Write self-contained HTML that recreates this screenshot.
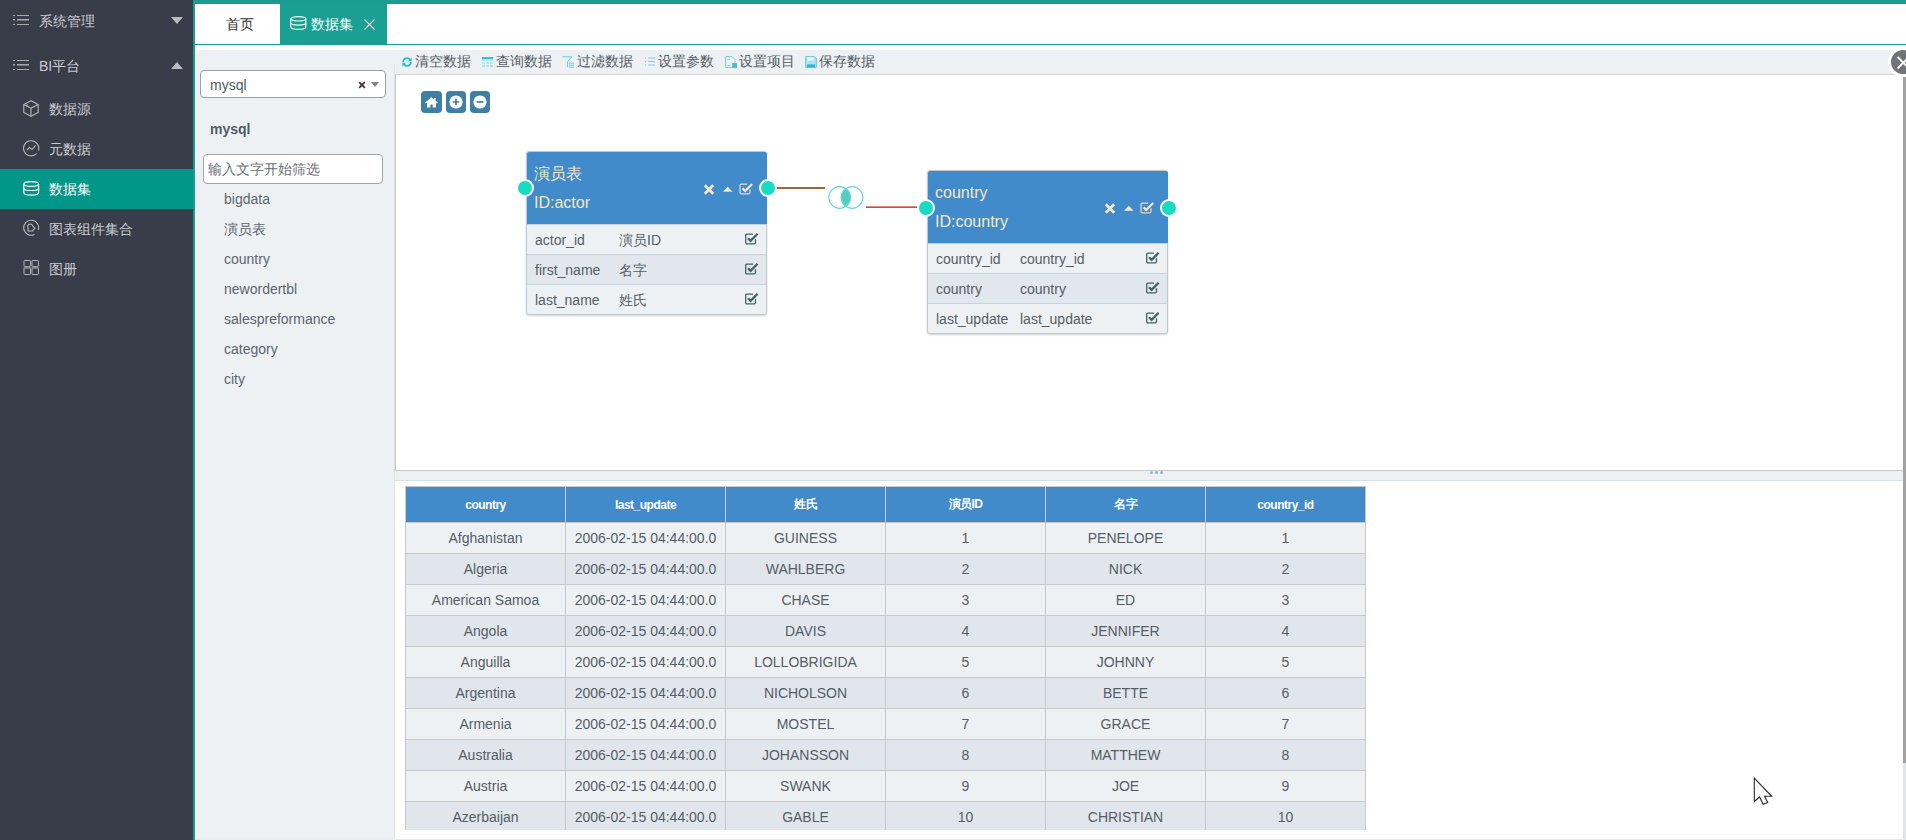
<!DOCTYPE html>
<html><head><meta charset="utf-8">
<style>
*{margin:0;padding:0;box-sizing:border-box}
html,body{width:1906px;height:840px;overflow:hidden;background:#fff;font-family:"Liberation Sans",sans-serif;position:relative}
.abs{position:absolute}
#side{left:0;top:0;width:193px;height:840px;background:#393d49}
.mi{position:absolute;left:0;width:193px;height:40px;color:#c9cbce;font-size:14px;line-height:40px}
.mi .t{position:absolute;left:49px;top:1px}
.mi svg{position:absolute}
#vbar{left:193px;top:0;width:2px;height:840px;background:#1a9c90}
#topbar{left:193px;top:0;width:1713px;height:4px;background:#1a9c90}
#tabline{left:195px;top:44px;width:1711px;height:1px;background:#1a9c90}
.tab{position:absolute;top:4px;height:40px;line-height:40px;font-size:14px}
#left{left:195px;top:50px;width:200px;height:790px;background:#edf1f4}
#sel{left:200px;top:70px;width:186px;height:28px;background:#fff;border:1px solid #9aa0a5;border-radius:4px;font-size:14px;color:#4f5a63;line-height:28px;padding-left:9px}
#filt{left:203px;top:154px;width:180px;height:30px;background:#fff;border:1px solid #a0a5a9;border-radius:4px;font-size:14px;color:#6b6f73;line-height:28px;padding-left:4px}
.li{position:absolute;left:224px;font-size:14px;color:#5b6670;line-height:20px}
#tool{left:395px;top:50px;width:1511px;height:25px;background:#edf1f4;border-bottom:1px solid #d3d6d9}
.tb{position:absolute;top:52px;font-size:14px;color:#555d66;line-height:18px}
#canvas{left:395px;top:75px;width:1511px;height:396px;background:#fff;border-left:1px solid #c8c8c8;border-bottom:1px solid #c8c8c8}
#split{left:395px;top:471px;width:1511px;height:10px;background:#edf1f4;border-bottom:1px solid #d7e1e8}
.zb{position:absolute;top:91px;width:20px;height:21px;background:#3e7fa3;border-radius:4px}
.dt{position:absolute;width:241px;background:#edf1f4;border:1px solid #c2c9ce;border-radius:3px;box-shadow:0 1px 2px rgba(0,0,0,.18)}
.dh{position:relative;height:72px;margin-right:-1px;margin-top:-0px;background:#428bca;color:#f6e7c6;font-size:16px;border-radius:2px 2px 0 0}
.dr{position:relative;height:30px;border-top:1px solid #c5d3dc;font-size:14px;color:#555e66;line-height:30px}
.dr.alt{background:#e2e6ed}
.dr .c1{position:absolute;left:8px}
.dr .c2{position:absolute;left:92px}
.dr svg{position:absolute;left:218px;top:8px}
.dot{position:absolute;width:18px;height:18px;border-radius:50%;background:#17dcc1;border:2px solid #fff}
#grid{border-collapse:collapse;font-size:14px;color:#555d66}
#grid td,#grid th{width:160px;text-align:center;border:1px solid #c8c8c8}
#grid th{height:36px;background:#428bca;color:#fff;font-size:12px;font-weight:bold;letter-spacing:-0.5px}
#grid td{height:31px;background:#edf1f4}
#grid tr.alt td{background:#e1e5ec}
</style></head><body>
<div id="side" class="abs">
  <div class="mi" style="top:0px;height:40px"><svg style="left:13px;top:15px" width="16" height="10" viewBox="0 0 16 10"><g fill="#a9abae"><rect x="0" y="0" width="2" height="1"/><rect x="4" y="0" width="12" height="1"/><rect x="0" y="4" width="2" height="1.5"/><rect x="4" y="4" width="12" height="1.5"/><rect x="0" y="9" width="2" height="1"/><rect x="4" y="9" width="12" height="1"/></g></svg><span class="t" style="left:39px">系统管理</span><svg style="left:171px;top:17px" width="12" height="7"><path d="M0 0H12L6 7Z" fill="#b9bbbe"/></svg></div>
  <div class="mi" style="top:45px"><svg style="left:13px;top:15px" width="16" height="10" viewBox="0 0 16 10"><g fill="#a9abae"><rect x="0" y="0" width="2" height="1"/><rect x="4" y="0" width="12" height="1"/><rect x="0" y="4" width="2" height="1.5"/><rect x="4" y="4" width="12" height="1.5"/><rect x="0" y="9" width="2" height="1"/><rect x="4" y="9" width="12" height="1"/></g></svg><span class="t" style="left:39px">BI平台</span><svg style="left:171px;top:17px" width="12" height="7"><path d="M0 7H12L6 0Z" fill="#b9bbbe"/></svg></div>
  <div class="mi" style="top:88px"><svg style="left:23px;top:12px" width="16" height="17" viewBox="0 0 16 17"><g fill="none" stroke="#b5b8bc" stroke-width="1.1" stroke-linejoin="round"><path d="M8 0.8L15.2 4.4V12.4L8 16.2L0.8 12.4V4.4Z"/><path d="M0.8 4.4L8 8.2L15.2 4.4M8 8.2V16.2"/><path d="M2.8 5.8L5 4.8"/></g></svg><span class="t">数据源</span></div>
  <div class="mi" style="top:128px"><svg style="left:23px;top:12px" width="17" height="17" viewBox="0 0 17 17"><g fill="none" stroke="#b5b8bc" stroke-width="1.1"><path d="M13.6 13.6A7.6 7.6 0 1 1 15.4 10.6"/><path d="M3.8 10.2L6.5 7.5L9 9.6L12.6 5.4"/></g></svg><span class="t">元数据</span></div>
  <div class="mi" style="top:169px;background:#009688;color:#fff"><svg style="left:23px;top:12px" width="17" height="15" viewBox="0 0 17 15"><g fill="none" stroke="#fff" stroke-width="1.2"><ellipse cx="8.2" cy="3" rx="7.4" ry="2.4"/><path d="M0.8 3V11.6C0.8 13 4 14.2 8.2 14.2S15.6 13 15.6 11.6V3"/><path d="M0.8 6.9C0.8 8.3 4 9.5 8.2 9.5S15.6 8.3 15.6 6.9"/></g></svg><span class="t" style="top:0">数据集</span></div>
  <div class="mi" style="top:208px"><svg style="left:23px;top:11px" width="17" height="17" viewBox="0 0 17 17"><g fill="none" stroke="#b5b8bc" stroke-width="1.1"><path d="M11.5 15.4A7.5 7.5 0 1 1 15.3 11"/><path d="M7.2 5.2A2.2 2.2 0 0 1 9.8 7.2L12 9.2L9.8 11.2V12H5V8.5A2.2 2.2 0 0 1 7.2 5.2Z"/></g></svg><span class="t">图表组件集合</span></div>
  <div class="mi" style="top:248px"><svg style="left:23px;top:11px" width="17" height="17" viewBox="0 0 17 17"><g fill="none" stroke="#b5b8bc" stroke-width="1"><rect x="1" y="1.5" width="6.5" height="6" rx="0.8"/><rect x="9" y="1.5" width="6.5" height="6" rx="0.8"/><rect x="1" y="9" width="6.5" height="6.5" rx="0.8"/><rect x="9" y="9" width="6.5" height="6.5" rx="0.8"/></g><rect x="0.5" y="7" width="7.5" height="2.5" fill="#8f9296" opacity="0.55"/><rect x="8.5" y="7" width="7.5" height="2.5" fill="#8f9296" opacity="0.55"/></svg><span class="t">图册</span></div>
</div>
<div id="vbar" class="abs"></div>
<div id="topbar" class="abs"></div>
<div class="tab" style="left:195px;width:85px;background:#fff;color:#333;text-align:center;padding-left:4px">首页</div>
<div class="tab" style="left:280px;width:107px;background:#1a9f93;color:#fff"><svg style="position:absolute;left:10px;top:12px" width="17" height="14" viewBox="0 0 17 14"><g fill="none" stroke="#f2f6f6" stroke-width="1.2"><ellipse cx="8.3" cy="2.8" rx="7.5" ry="2.2"/><path d="M0.8 2.8V10.9C0.8 12.2 4 13.3 8.3 13.3S15.8 12.2 15.8 10.9V2.8"/><path d="M0.8 6.8C0.8 8.1 4 9.1 8.3 9.1S15.8 8.1 15.8 6.8"/></g></svg><span style="position:absolute;left:31px">数据集</span><svg style="position:absolute;left:83.5px;top:14.5px" width="11" height="11" viewBox="0 0 11 11"><path d="M0.5 0.5L10.5 10.5M10.5 0.5L0.5 10.5" stroke="#e6dcdc" stroke-width="1.1"/></svg></div>
<div id="tabline" class="abs"></div>

<div id="left" class="abs"></div><div class="abs" style="left:394px;top:64px;width:1px;height:776px;background:#dde2e6"></div>
<div id="sel" class="abs">mysql<svg style="position:absolute;left:157px;top:10px" width="8" height="8" viewBox="0 0 8 8"><path d="M1.2 1.2L6.8 6.8M6.8 1.2L1.2 6.8" stroke="#3a2f38" stroke-width="1.7"/></svg><svg style="position:absolute;left:170px;top:11px" width="8" height="5"><path d="M0 0H8L4 5Z" fill="#7c858c"/></svg></div>
<div class="abs" style="left:210px;top:119px;font-size:14px;font-weight:bold;color:#515c66;line-height:20px">mysql</div>
<div id="filt" class="abs">输入文字开始筛选</div>
<div class="li" style="top:189px">bigdata</div>
<div class="li" style="top:219px">演员表</div>
<div class="li" style="top:249px">country</div>
<div class="li" style="top:279px">newordertbl</div>
<div class="li" style="top:309px">salespreformance</div>
<div class="li" style="top:339px">category</div>
<div class="li" style="top:369px">city</div>

<div id="tool" class="abs"></div>
<div class="tb" style="left:415px">清空数据</div>
<div class="tb" style="left:496px">查询数据</div>
<div class="tb" style="left:577px">过滤数据</div>
<div class="tb" style="left:658px">设置参数</div>
<div class="tb" style="left:739px">设置项目</div>
<div class="tb" style="left:819px">保存数据</div>


<svg class="abs" style="left:402px;top:57px" width="10" height="10" viewBox="0 0 10 10"><g fill="none" stroke="#27bcd4" stroke-width="1.8"><path d="M1.2 5A3.8 3.8 0 0 1 8 2.6"/><path d="M8.8 5A3.8 3.8 0 0 1 2 7.4"/></g><path d="M9.6 0.6V4.2H6Z M0.4 9.4V5.8H4Z" fill="#27bcd4"/></svg>
<svg class="abs" style="left:482px;top:57px" width="11" height="10" viewBox="0 0 11 10"><rect x="0" y="0" width="11" height="10" rx="1" fill="#a9e1ef"/><rect x="0" y="0" width="11" height="2" fill="#3bbdd6"/><g stroke="#fff" stroke-width="0.8"><path d="M3.7 2V10M7.3 2V10M0 4.6H11M0 7.3H11"/></g></svg>
<svg class="abs" style="left:562px;top:56px" width="12" height="12" viewBox="0 0 12 12"><path d="M0.6 0.8H9.8L5.6 5.4V11.2" fill="none" stroke="#52c9dc" stroke-width="0.9"/><g stroke="#52c9dc" stroke-width="0.9"><path d="M7 7.2H12M7 9.2H12M7 11.2H12"/></g></svg>
<svg class="abs" style="left:645px;top:57px" width="10" height="9" viewBox="0 0 10 9"><g stroke="#74d3e6" stroke-width="1"><path d="M0 1H1M3 1H10M0 4.5H1M3 4.5H10M0 8H1M3 8H10"/></g></svg>
<svg class="abs" style="left:725px;top:56px" width="12" height="12" viewBox="0 0 12 12"><path d="M0.6 0.6H7L10 3.6V11.4H0.6Z" fill="#eef6f9" stroke="#62cbe0" stroke-width="0.9"/><path d="M2.5 3.5H5M2.5 9.5H5" stroke="#9ad" stroke-width="0.8"/><rect x="7.2" y="7" width="4.8" height="5" fill="#3fc0d4"/></svg>
<svg class="abs" style="left:805px;top:56px" width="12" height="12" viewBox="0 0 12 12"><path d="M0.6 0.6H9.4L11.4 2.6V11.4H0.6Z" fill="#aee3f0" stroke="#56c8de" stroke-width="0.9"/><rect x="2.6" y="1" width="6" height="3.6" fill="#f4fbfd"/><rect x="2" y="8.4" width="8" height="3" fill="#28b7cf"/></svg>
<div id="canvas" class="abs"></div>
<div class="zb" style="left:421px;width:21px;height:22px"><svg style="position:absolute;left:4px;top:6px" width="13" height="11" viewBox="0 0 13 11"><path d="M6.5 0.3L0.2 5.6L1 6.4L2 5.6V10.6H5.3V7.4H7.7V10.6H11V5.6L12 6.4L12.8 5.6L10.6 3.7V1H9V2.4Z" fill="#fff"/></svg></div>
<div class="zb" style="left:446px;height:22px"><svg style="position:absolute;left:3px;top:4px" width="14" height="14" viewBox="0 0 14 14"><circle cx="7" cy="7" r="6.6" fill="#fff"/><path d="M3.8 7H10.2M7 3.8V10.2" stroke="#3e7fa3" stroke-width="1.7"/></svg></div>
<div class="zb" style="left:470px;height:22px"><svg style="position:absolute;left:3px;top:4px" width="14" height="14" viewBox="0 0 14 14"><circle cx="7" cy="7" r="6.6" fill="#fff"/><path d="M3.6 7H10.4" stroke="#3e7fa3" stroke-width="1.7"/></svg></div>

<div class="dt" style="left:526px;top:151px">
  <div class="dh"><div style="position:absolute;left:7px;top:7px;line-height:29px">演员表<br>ID:actor</div><svg style="position:absolute;left:175.5px;top:30px" width="50" height="14" viewBox="0 0 50 14"><path d="M1.8 3.3L10.2 11.7M10.2 3.3L1.8 11.7" stroke="#f6e7c6" stroke-width="2.8"/><path d="M20 9.8H29.5L24.75 4.8Z" fill="#f6e7c6"/><path d="M47 7.2V10.6Q47 11.8 45.8 11.8H38.2Q37 11.8 37 10.6V3.4Q37 2.2 38.2 2.2H44.2" fill="none" stroke="#e9dcbc" stroke-width="1.2"/><path d="M39.6 6.4L42.2 9L49.2 2" fill="none" stroke="#f6e7c6" stroke-width="2.2"/></svg></div>
  <div class="dr"><span class="c1">actor_id</span><span class="c2">演员ID</span><svg width="14" height="12" viewBox="0 0 14 12"><path d="M10.5 6.2V9.6Q10.5 10.9 9.2 10.9H2Q0.7 10.9 0.7 9.6V2.4Q0.7 1.1 2 1.1H8" fill="none" stroke="#3f6462" stroke-width="1.3"/><path d="M3 5.2L5.6 7.8L12.6 0.8" fill="none" stroke="#3f6462" stroke-width="2.3"/></svg></div>
  <div class="dr alt"><span class="c1">first_name</span><span class="c2">名字</span><svg width="14" height="12" viewBox="0 0 14 12"><path d="M10.5 6.2V9.6Q10.5 10.9 9.2 10.9H2Q0.7 10.9 0.7 9.6V2.4Q0.7 1.1 2 1.1H8" fill="none" stroke="#3f6462" stroke-width="1.3"/><path d="M3 5.2L5.6 7.8L12.6 0.8" fill="none" stroke="#3f6462" stroke-width="2.3"/></svg></div>
  <div class="dr"><span class="c1">last_name</span><span class="c2">姓氏</span><svg width="14" height="12" viewBox="0 0 14 12"><path d="M10.5 6.2V9.6Q10.5 10.9 9.2 10.9H2Q0.7 10.9 0.7 9.6V2.4Q0.7 1.1 2 1.1H8" fill="none" stroke="#3f6462" stroke-width="1.3"/><path d="M3 5.2L5.6 7.8L12.6 0.8" fill="none" stroke="#3f6462" stroke-width="2.3"/></svg></div>
</div>
<div class="dt" style="left:927px;top:170px">
  <div class="dh"><div style="position:absolute;left:7px;top:7px;line-height:29px">country<br>ID:country</div><svg style="position:absolute;left:175.5px;top:30px" width="50" height="14" viewBox="0 0 50 14"><path d="M1.8 3.3L10.2 11.7M10.2 3.3L1.8 11.7" stroke="#f6e7c6" stroke-width="2.8"/><path d="M20 9.8H29.5L24.75 4.8Z" fill="#f6e7c6"/><path d="M47 7.2V10.6Q47 11.8 45.8 11.8H38.2Q37 11.8 37 10.6V3.4Q37 2.2 38.2 2.2H44.2" fill="none" stroke="#e9dcbc" stroke-width="1.2"/><path d="M39.6 6.4L42.2 9L49.2 2" fill="none" stroke="#f6e7c6" stroke-width="2.2"/></svg></div>
  <div class="dr"><span class="c1">country_id</span><span class="c2">country_id</span><svg width="14" height="12" viewBox="0 0 14 12"><path d="M10.5 6.2V9.6Q10.5 10.9 9.2 10.9H2Q0.7 10.9 0.7 9.6V2.4Q0.7 1.1 2 1.1H8" fill="none" stroke="#3f6462" stroke-width="1.3"/><path d="M3 5.2L5.6 7.8L12.6 0.8" fill="none" stroke="#3f6462" stroke-width="2.3"/></svg></div>
  <div class="dr alt"><span class="c1">country</span><span class="c2">country</span><svg width="14" height="12" viewBox="0 0 14 12"><path d="M10.5 6.2V9.6Q10.5 10.9 9.2 10.9H2Q0.7 10.9 0.7 9.6V2.4Q0.7 1.1 2 1.1H8" fill="none" stroke="#3f6462" stroke-width="1.3"/><path d="M3 5.2L5.6 7.8L12.6 0.8" fill="none" stroke="#3f6462" stroke-width="2.3"/></svg></div>
  <div class="dr"><span class="c1">last_update</span><span class="c2">last_update</span><svg width="14" height="12" viewBox="0 0 14 12"><path d="M10.5 6.2V9.6Q10.5 10.9 9.2 10.9H2Q0.7 10.9 0.7 9.6V2.4Q0.7 1.1 2 1.1H8" fill="none" stroke="#3f6462" stroke-width="1.3"/><path d="M3 5.2L5.6 7.8L12.6 0.8" fill="none" stroke="#3f6462" stroke-width="2.3"/></svg></div>
</div>


<div class="dot" style="left:516px;top:179px"></div>
<div class="dot" style="left:759px;top:179px"></div>
<div class="dot" style="left:917px;top:198.5px"></div>
<div class="dot" style="left:1160px;top:199px"></div>
<div class="abs" style="left:777px;top:187px;width:48px;height:2px;background:#93693a"></div>
<div class="abs" style="left:866px;top:206px;width:51px;height:1px;background:#e58d78"></div>
<div class="abs" style="left:866px;top:207px;width:51px;height:1px;background:#8f6a3a"></div>
<svg class="abs" style="left:826px;top:184px" width="40" height="27" viewBox="0 0 40 27"><defs><clipPath id="cl"><circle cx="13.6" cy="13.5" r="11.3"/></clipPath></defs><circle cx="26.1" cy="13.5" r="11.3" fill="#52cfbf" clip-path="url(#cl)"/><g fill="none" stroke="#6ad4e0" stroke-width="1.2"><circle cx="13.6" cy="13.5" r="10.8"/><circle cx="26.1" cy="13.5" r="10.8"/></g></svg>
<div id="split" class="abs"></div>

<div class="abs" style="left:405px;top:486px;width:962px;height:344px;overflow:hidden"><table id="grid">
<tr><th>country</th><th>last_update</th><th>姓氏</th><th>演员ID</th><th>名字</th><th>country_id</th></tr>
<tr><td>Afghanistan</td><td>2006-02-15 04:44:00.0</td><td>GUINESS</td><td>1</td><td>PENELOPE</td><td>1</td></tr>
<tr class="alt"><td>Algeria</td><td>2006-02-15 04:44:00.0</td><td>WAHLBERG</td><td>2</td><td>NICK</td><td>2</td></tr>
<tr><td>American Samoa</td><td>2006-02-15 04:44:00.0</td><td>CHASE</td><td>3</td><td>ED</td><td>3</td></tr>
<tr class="alt"><td>Angola</td><td>2006-02-15 04:44:00.0</td><td>DAVIS</td><td>4</td><td>JENNIFER</td><td>4</td></tr>
<tr><td>Anguilla</td><td>2006-02-15 04:44:00.0</td><td>LOLLOBRIGIDA</td><td>5</td><td>JOHNNY</td><td>5</td></tr>
<tr class="alt"><td>Argentina</td><td>2006-02-15 04:44:00.0</td><td>NICHOLSON</td><td>6</td><td>BETTE</td><td>6</td></tr>
<tr><td>Armenia</td><td>2006-02-15 04:44:00.0</td><td>MOSTEL</td><td>7</td><td>GRACE</td><td>7</td></tr>
<tr class="alt"><td>Australia</td><td>2006-02-15 04:44:00.0</td><td>JOHANSSON</td><td>8</td><td>MATTHEW</td><td>8</td></tr>
<tr><td>Austria</td><td>2006-02-15 04:44:00.0</td><td>SWANK</td><td>9</td><td>JOE</td><td>9</td></tr>
<tr class="alt"><td>Azerbaijan</td><td>2006-02-15 04:44:00.0</td><td>GABLE</td><td>10</td><td>CHRISTIAN</td><td>10</td></tr>
</table></div>
<div class="abs" style="left:195px;top:839px;width:1711px;height:1px;background:#ececec"></div>

<div class="abs" style="left:1149.5px;top:471px;width:3px;height:3px;border-radius:50%;background:#8db3d3"></div>
<div class="abs" style="left:1155px;top:471px;width:3px;height:3px;border-radius:50%;background:#8db3d3"></div>
<div class="abs" style="left:1160px;top:471px;width:3px;height:3px;border-radius:50%;background:#8db3d3"></div>
<div class="abs" style="left:1903px;top:77px;width:3px;height:686px;background:#a2a2a2"></div>
<div class="abs" style="left:1903px;top:763px;width:3px;height:77px;background:#e3e4e5"></div>
<div class="abs" style="left:1888px;top:47px;width:30px;height:30px;border-radius:50%;background:#717579;border:3px solid #fff"></div>
<svg class="abs" style="left:1896px;top:55px" width="10" height="14" viewBox="0 0 10 14"><path d="M1.6 2L13 13.4M13 2L1.6 13.4" stroke="#fff" stroke-width="1.9"/></svg>
<svg class="abs" style="left:1750.5px;top:775px" width="26" height="34" viewBox="0 0 26 34"><path d="M3.3 3.1V26.5L8.6 22L12.1 29.3L16.7 27.4L13.6 21.3H20.7Z" fill="#fff" stroke="#2a2a2a" stroke-width="1.1" stroke-linejoin="miter"/></svg>
</body></html>
